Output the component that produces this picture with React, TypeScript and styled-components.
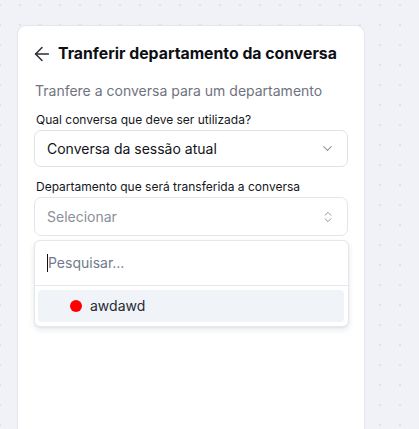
import React from "react";
import styled, { createGlobalStyle } from "styled-components";
import { ArrowLeft, ChevronDown, ChevronsUpDown } from "lucide-react";

const Global = createGlobalStyle`
  html, body { margin: 0; padding: 0; height: 100%; overflow: hidden; }
  body {
    font-family: Inter, "Noto Sans", sans-serif;
    background-color: #f0f2f7;
    background-image: radial-gradient(circle, #dde1e8 1px, transparent 1.2px);
    background-size: 20px 20px;
    background-position: -10px -5px;
  }
`;

const Page = styled.div`
  padding: 25px 0 0 17px;
  height: 100vh;
  box-sizing: border-box;
`;

const Card = styled.div`
  width: 348px;
  min-height: 460px;
  box-sizing: border-box;
  background: #ffffff;
  border: 1px solid #e3e6ec;
  border-radius: 9px;
  padding: 17px 16px 16px 16px;
  display: flex;
  flex-direction: column;
`;

const TitleRow = styled.div`
  display: flex;
  align-items: center;
  gap: 5px;
  height: 22px;
  color: #2a2d35;

  & > svg {
    margin-left: -3px;
  }
`;

const Title = styled.h1`
  margin: 0;
  font-size: 15.8px;
  font-weight: 700;
  line-height: 22px;
  color: #0d0f14;
`;

const Subtitle = styled.p`
  margin: 16px 0 0 1px;
  font-size: 14px;
  line-height: 20px;
  color: #6f7380;
`;

const Label = styled.label<{ $top: number }>`
  display: block;
  margin-top: ${(p) => p.$top}px;
  padding-left: 2px;
  font-size: 12px;
  line-height: 16px;
  color: #15171c;
`;

const SelectBox = styled.div<{ $height: number; $border: string }>`
  margin-top: 2px;
  height: ${(p) => p.$height}px;
  box-sizing: border-box;
  border: 1px solid ${(p) => p.$border};
  border-radius: 7px;
  display: flex;
  align-items: center;
  justify-content: space-between;
  padding: 0 12px 0 12px;
  background: #fff;
`;

const SelectText = styled.span<{ $placeholder?: boolean }>`
  font-size: 14px;
  line-height: 20px;
  color: ${(p) => (p.$placeholder ? "#8b8f98" : "#111318")};
`;

const IconWrap = styled.span`
  display: flex;
  color: #8e939c;
`;

const Popover = styled.div`
  margin-top: 4px;
  width: 315px;
  box-sizing: border-box;
  border: 1px solid #e3e7ee;
  border-radius: 6px;
  background: #fff;
  box-shadow: 0 3px 6px rgba(20, 30, 50, 0.09), 0 1px 2px rgba(20, 30, 50, 0.06);
  overflow: hidden;
`;

const SearchRow = styled.div`
  height: 44px;
  display: flex;
  align-items: center;
  padding: 0 12px;
  border-bottom: 1px solid #e3e7ee;
`;

const Caret = styled.span`
  width: 1px;
  height: 18px;
  background: #111;
`;

const SearchPlaceholder = styled.span`
  font-size: 14px;
  line-height: 20px;
  color: #717a8c;
`;

const List = styled.div`
  padding: 4px 4px 4px 3px;
`;

const Option = styled.div<{ $active?: boolean }>`
  height: 32px;
  border-radius: 4px;
  background: ${(p) => (p.$active ? "#f0f3f8" : "transparent")};
  display: flex;
  align-items: center;
  gap: 8px;
  padding-left: 32px;
`;

const Dot = styled.span<{ $color: string }>`
  width: 12px;
  height: 12px;
  border-radius: 50%;
  background: ${(p) => p.$color};
`;

const OptionText = styled.span`
  font-size: 14px;
  line-height: 20px;
  color: #262a33;
`;

export default function App() {
  return (
    <>
      <Global />
      <Page>
        <Card>
          <TitleRow>
            <ArrowLeft size={22} strokeWidth={1.6} />
            <Title>Tranferir departamento da conversa</Title>
          </TitleRow>
          <Subtitle>Tranfere a conversa para um departamento</Subtitle>
          <Label $top={11}>Qual conversa que deve ser utilizada?</Label>
          <SelectBox $height={37} $border="#dfe2e8">
            <SelectText>Conversa da sessão atual</SelectText>
            <IconWrap>
              <ChevronDown size={15} strokeWidth={1.7} />
            </IconWrap>
          </SelectBox>
          <Label $top={12}>Departamento que será transferida a conversa</Label>
          <SelectBox $height={39} $border="#e1e6ee">
            <SelectText $placeholder>Selecionar</SelectText>
            <IconWrap>
              <ChevronsUpDown size={14} strokeWidth={1.7} />
            </IconWrap>
          </SelectBox>
          <Popover>
            <SearchRow>
              <Caret />
              <SearchPlaceholder>Pesquisar...</SearchPlaceholder>
            </SearchRow>
            <List>
              <Option $active>
                <Dot $color="#ff0000" />
                <OptionText>awdawd</OptionText>
              </Option>
            </List>
          </Popover>
        </Card>
      </Page>
    </>
  );
}
